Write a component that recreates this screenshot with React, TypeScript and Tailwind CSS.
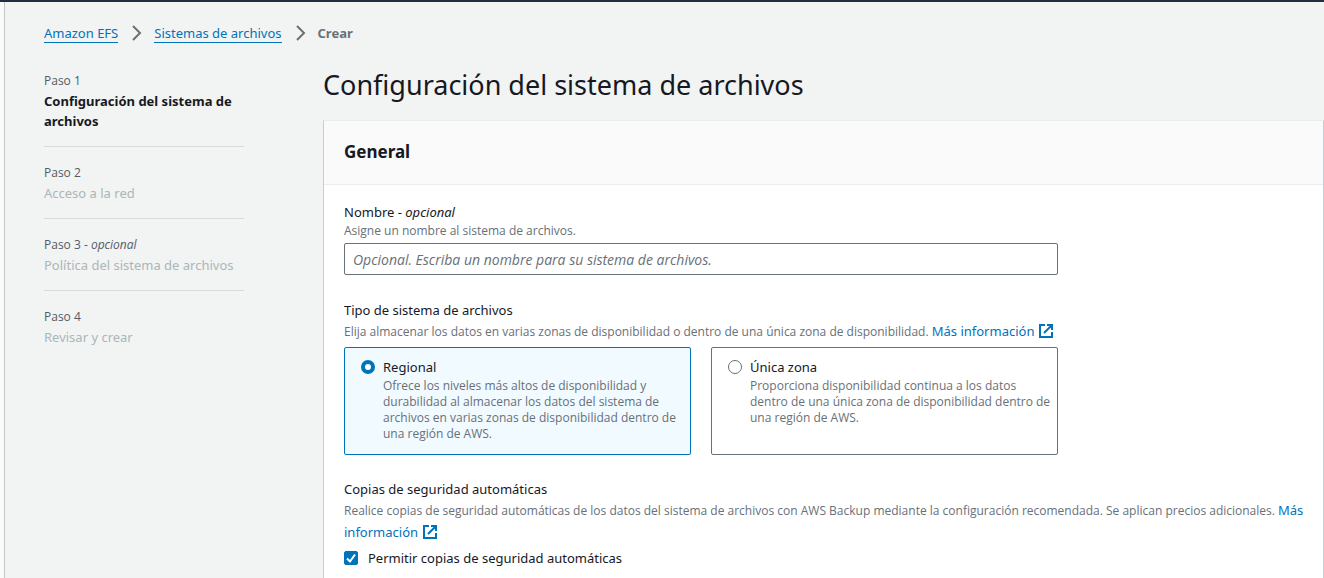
import type { ReactNode } from "react";

function Chevron() {
  return (
    <svg aria-hidden="true" viewBox="0 0 16 16" className="size-4 shrink-0 fill-none stroke-[#687078] stroke-2">
      <path d="M5 1l7 7-7 7" />
    </svg>
  );
}

function ExternalIcon() {
  return (
    <svg aria-hidden="true" viewBox="0 0 16 16" className="ml-1 inline-block size-4 fill-none stroke-current stroke-2 align-[-3px]">
      <path d="M7 2H2v12h12V9M9 2h5v5M6 10l8-8" />
    </svg>
  );
}

function InfoLink() {
  return (
    <a href="#info" className="font-['Noto_Sans',sans-serif] text-[13px] leading-5 text-[#0073bb]">
      Más información
      <ExternalIcon />
    </a>
  );
}

type StepProps = { label: ReactNode; title: string; active?: boolean };

function Step({ label, title, active }: StepProps) {
  return (
    <li className="border-b border-[#d5dbdb] pt-4 pb-[15px] first:pt-0 last:border-b-0">
      <div className="font-['Open_Sans',sans-serif] text-xs leading-5 text-[#545b64]">{label}</div>
      <div className={active ? "font-bold text-[#16191f]" : "text-[#aab7b8]"}>{title}</div>
    </li>
  );
}

type TileProps = { id: string; title: string; text: string; checked?: boolean };

function Tile({ id, title, text, checked }: TileProps) {
  return (
    <label
      htmlFor={id}
      className="flex min-h-[108px] flex-1 gap-2 rounded-xs border border-[#687078] bg-white pt-[9px] pr-1 pb-3 pl-4 has-checked:border-[#0073bb] has-checked:bg-[#f1faff]"
    >
      <input
        id={id}
        type="radio"
        name="type"
        defaultChecked={checked}
        className="mt-[3px] size-3.5 shrink-0 appearance-none rounded-full border border-[#687078] bg-white checked:border-4 checked:border-[#0073bb]"
      />
      <span>
        <span className="block">{title}</span>
        <span className="mt-px block font-['Open_Sans',sans-serif] text-xs text-[#687078]">{text}</span>
      </span>
    </label>
  );
}

export default function App() {
  return (
    <div className="flex h-screen flex-col overflow-hidden border-t-2 border-[#232f3e] bg-[#fafafa] pl-1 font-['Noto_Sans',sans-serif] text-[13px] leading-5 text-[#16191f]">
      <div className="flex-1 border-l border-[#c3c8ca] bg-[#f2f3f3] pt-[21px] pl-[39px]">
        <nav aria-label="Ruta" className="flex items-center gap-2.5">
          <a href="#efs" className="border-b border-[#0073bb] leading-[18px] text-[#0073bb]">Amazon EFS</a>
          <Chevron />
          <a href="#sistemas" className="border-b border-[#0073bb] leading-[18px] text-[#0073bb]">Sistemas de archivos</a>
          <Chevron />
          <span className="font-bold text-[#687078]">Crear</span>
        </nav>

        <div className="flex pt-7">
          <ol className="mr-[79px] w-[200px] shrink-0">
            <Step label="Paso 1" title="Configuración del sistema de archivos" active />
            <Step label="Paso 2" title="Acceso a la red" />
            <Step label={<>Paso 3 - <em>opcional</em></>} title="Política del sistema de archivos" />
            <Step label="Paso 4" title="Revisar y crear" />
          </ol>

          <main className="min-w-0 flex-1">
            <h1 className="pb-[21px] text-[27px] leading-7">Configuración del sistema de archivos</h1>
            <section className="border border-[#c9cdcf] border-t-[#eaeded] bg-white">
              <header className="border-b border-[#eaeded] bg-[#fafafa] px-5 pt-5 pb-[21px]">
                <h2 className="text-[17px] leading-[22px] font-bold">General</h2>
              </header>
              <form className="pt-[17px] pr-4 pb-10 pl-5">
                <div className="max-w-[714px]">
                  <label htmlFor="name" className="block">Nombre - <em>opcional</em></label>
                  <p className="mt-px mb-1 font-['Open_Sans',sans-serif] text-xs text-[#687078]">Asigne un nombre al sistema de archivos.</p>
                  <input
                    id="name"
                    type="text"
                    placeholder="Opcional. Escriba un nombre para su sistema de archivos."
                    className="h-8 w-full rounded-xs border border-[#687078] bg-white px-2 font-['Open_Sans',sans-serif] text-sm placeholder:text-[#687078] placeholder:italic"
                  />
                </div>

                <fieldset className="mt-[25px]">
                  <legend>Tipo de sistema de archivos</legend>
                  <p className="mt-px mb-1 font-['Open_Sans',sans-serif] text-xs leading-[22px] text-[#687078]">
                    Elija almacenar los datos en varias zonas de disponibilidad o dentro de una única zona de disponibilidad. <InfoLink />
                  </p>
                  <div className="flex max-w-[714px] gap-5">
                    <Tile
                      id="regional"
                      title="Regional"
                      text="Ofrece los niveles más altos de disponibilidad y durabilidad al almacenar los datos del sistema de archivos en varias zonas de disponibilidad dentro de una región de AWS."
                      checked
                    />
                    <Tile
                      id="zona"
                      title="Única zona"
                      text="Proporciona disponibilidad continua a los datos dentro de una única zona de disponibilidad dentro de una región de AWS."
                    />
                  </div>
                </fieldset>

                <fieldset className="mt-6">
                  <legend>Copias de seguridad automáticas</legend>
                  <p className="mt-px mb-1 font-['Open_Sans',sans-serif] text-xs leading-[22px] text-[#687078]">
                    Realice copias de seguridad automáticas de los datos del sistema de archivos con AWS Backup mediante la configuración recomendada. Se aplican precios adicionales. <InfoLink />
                  </p>
                  <div className="flex items-center gap-2.5">
                    <span className="grid size-3.5 shrink-0">
                      <input
                        id="backup"
                        type="checkbox"
                        defaultChecked
                        className="peer col-start-1 row-start-1 size-3.5 appearance-none rounded-xs border border-[#687078] bg-white checked:border-[#0073bb] checked:bg-[#0073bb]"
                      />
                      <svg aria-hidden="true" viewBox="0 0 14 14" className="pointer-events-none invisible col-start-1 row-start-1 size-3.5 fill-none stroke-white stroke-2 peer-checked:visible">
                        <path d="M3 7.5l3 3 5-7" />
                      </svg>
                    </span>
                    <label htmlFor="backup">Permitir copias de seguridad automáticas</label>
                  </div>
                </fieldset>
              </form>
            </section>
          </main>
        </div>
      </div>
    </div>
  );
}
